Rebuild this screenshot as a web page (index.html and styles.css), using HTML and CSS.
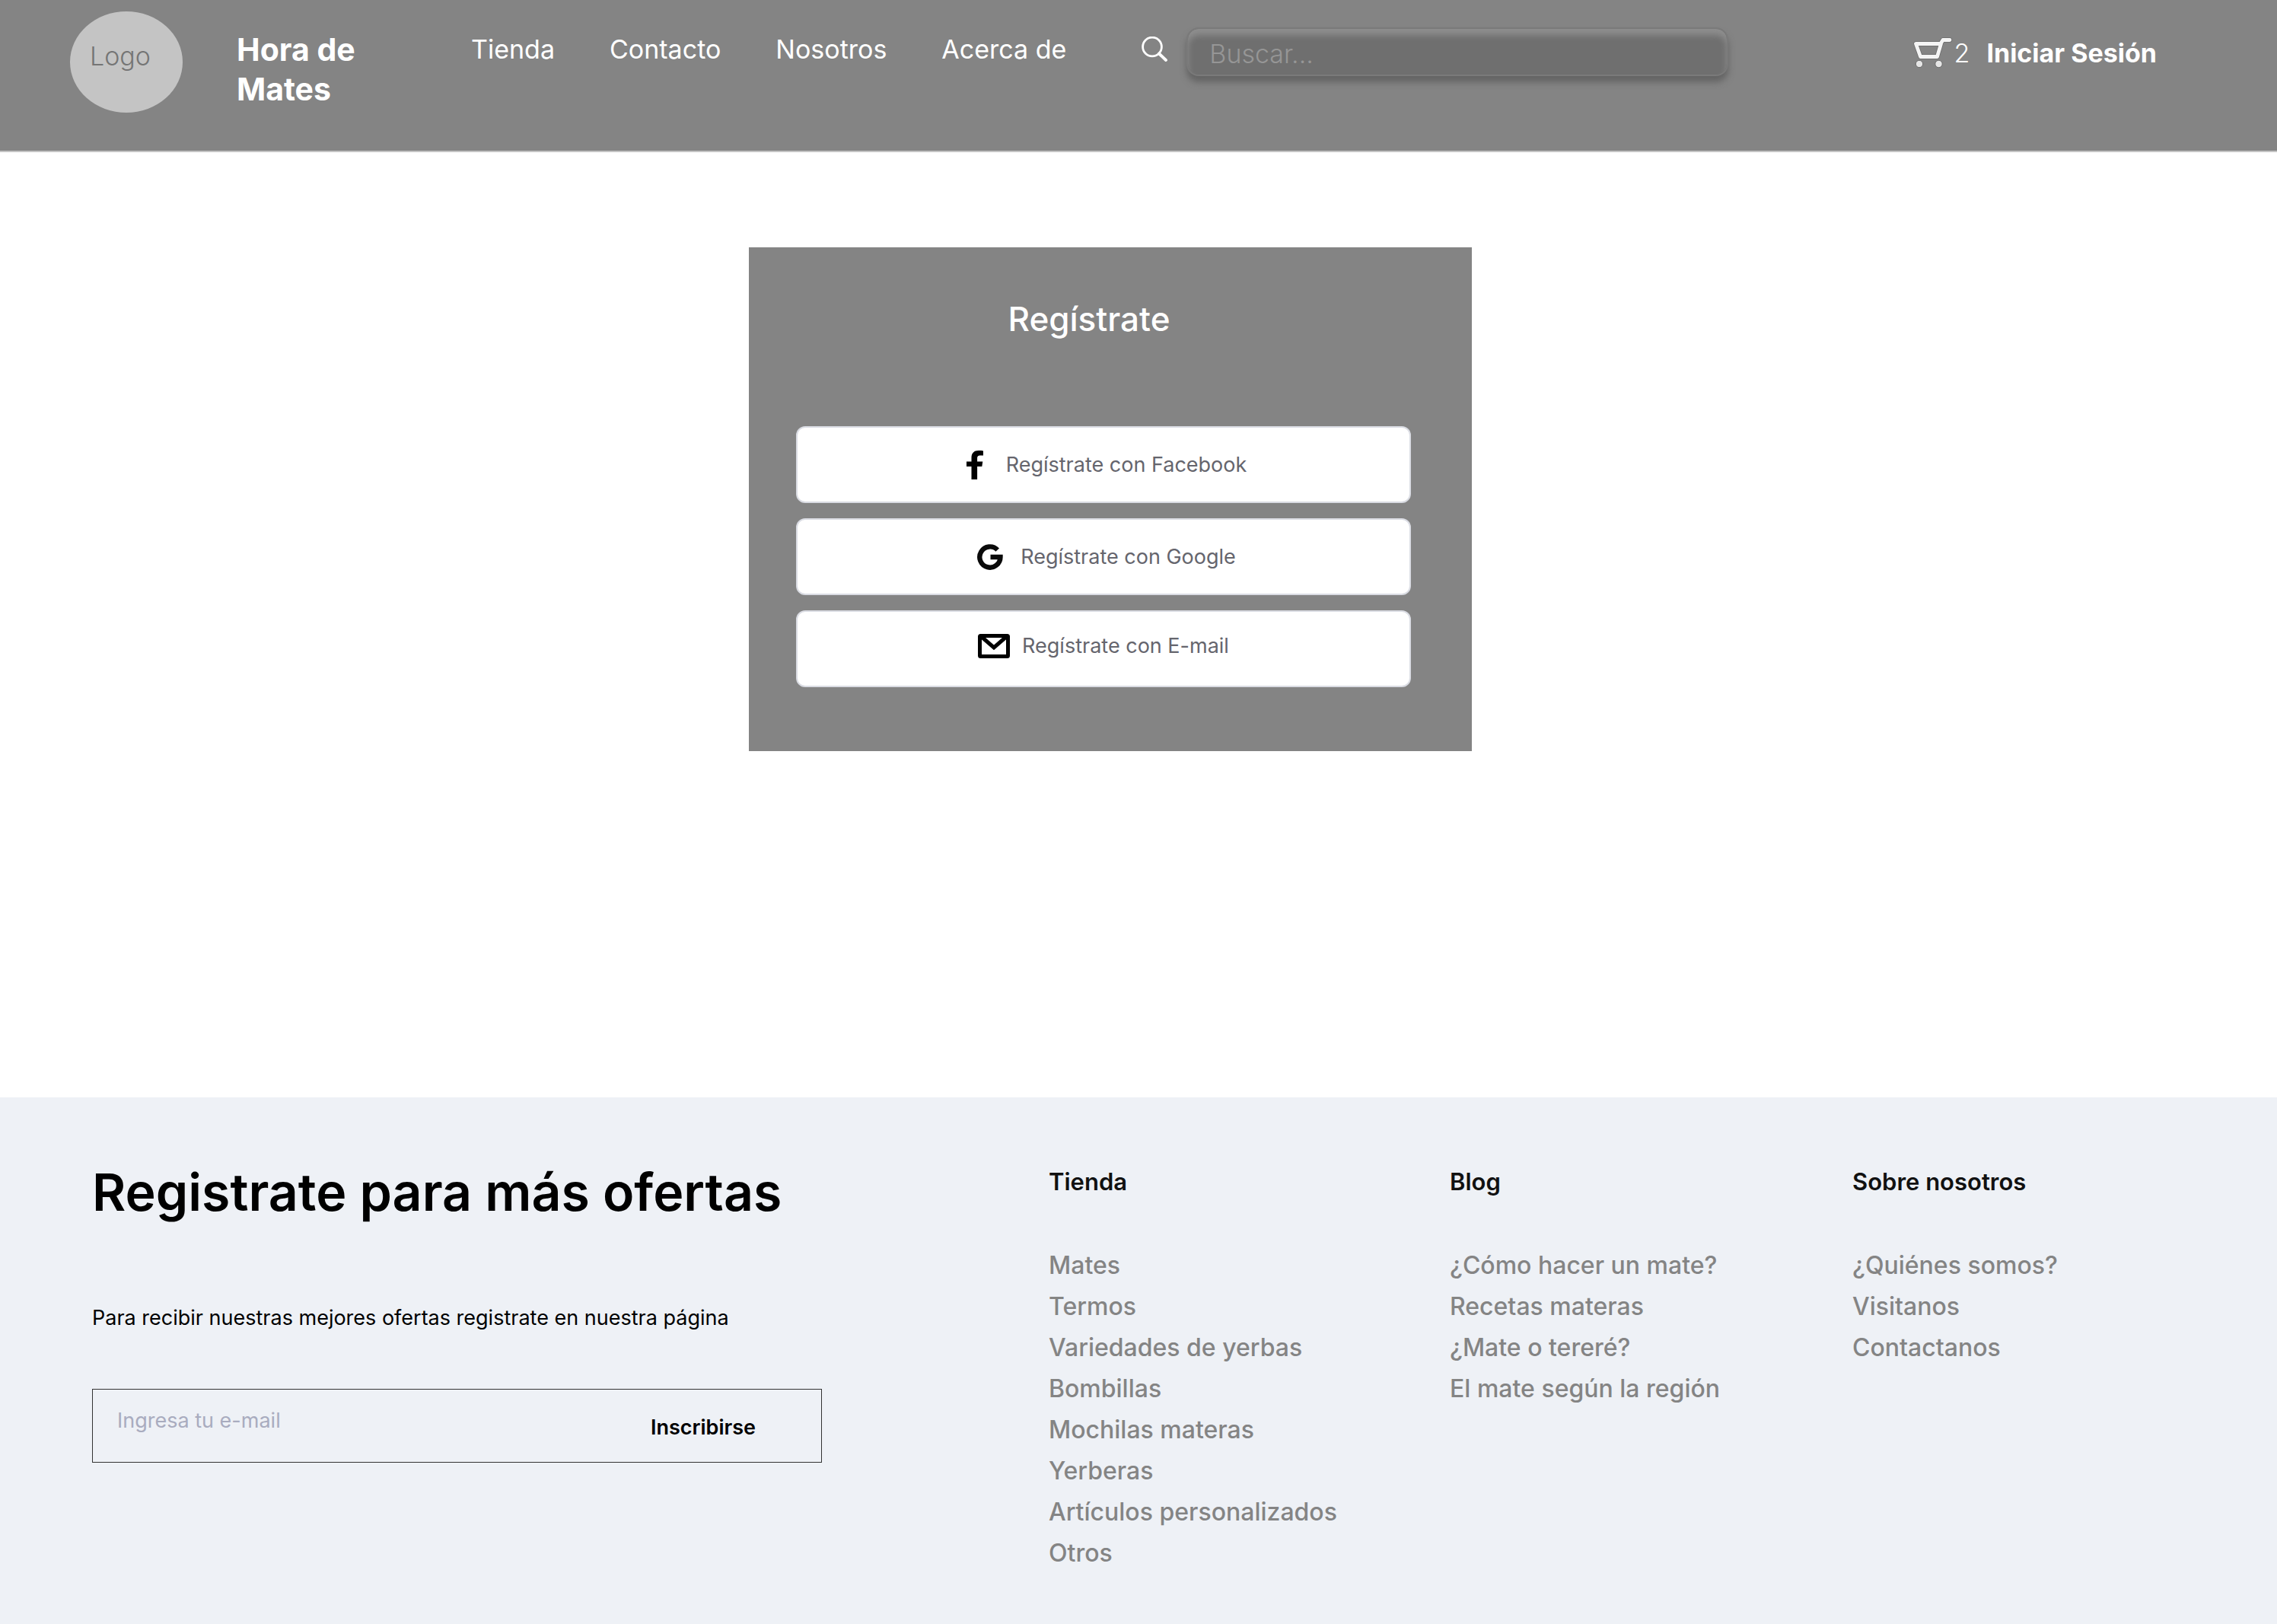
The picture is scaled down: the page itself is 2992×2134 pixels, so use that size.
FILE: index.html
```html
<!DOCTYPE html>
<html lang="es">
<head>
<meta charset="utf-8">
<meta name="viewport" content="width=device-width, initial-scale=1">
<title>Hora de Mates</title>
<link rel="stylesheet" href="styles.css">
</head>
<body>
<header class="topbar">
  <a class="logo" href="#">Logo</a>
  <a class="brand" href="#">Hora de Mates</a>
  <nav class="nav">
    <a href="#">Tienda</a>
    <a href="#">Contacto</a>
    <a href="#">Nosotros</a>
    <a href="#">Acerca de</a>
  </nav>
  <form class="search">
    <label class="search-label" for="buscar">
      <svg width="36" height="34" viewBox="0 0 36 34" role="img" aria-label="Buscar"><circle cx="14" cy="13.500" r="12.400" fill="none" stroke="#fff" stroke-width="2.800"/><path d="M23 22.500 32 31" stroke="#fff" stroke-width="3.800" stroke-linecap="round"/></svg>
    </label>
    <input class="search-input" id="buscar" type="search" placeholder="Buscar...">
  </form>
  <div class="account">
    <a class="cart" href="#" aria-label="Carrito, 2 productos">
      <svg width="53" height="44" viewBox="0 0 53 44"><g fill="none" stroke="#6b6b6b" stroke-width="6.400" stroke-linejoin="round" stroke-linecap="round"><path d="M3.500 9.500H36.500L31.500 26.500H9.500ZM36 9.500 39 4.500H48"/></g><g fill="none" stroke="#f4f4f4" stroke-width="4.800" stroke-linejoin="round" stroke-linecap="round"><path d="M3.500 9.500H36.500L31.500 26.500H9.500ZM36 9.500 39 4.500H48"/></g><g fill="#e6e6e6" stroke="#6b6b6b"><circle cx="8" cy="36" r="4.700"/><circle cx="33.500" cy="36" r="4.700"/></g></svg>
      <span>2</span>
    </a>
    <a class="login" href="#">Iniciar Sesión</a>
  </div>
</header>

<main class="main">
  <section class="card">
    <h1 class="card-title">Regístrate</h1>
    <div class="options">
      <button class="option option-facebook" type="button">
        <svg width="22" height="38" viewBox="0 0 22 38"><path d="M6.500 38V21H0v-6.600h6.500V9.500C6.500 3.200 10 0 16 0c2.600 0 4.400.200 6 .400v6h-3.600c-3.400 0-4.300 1.500-4.300 3.900v4.100h7.200l-1 6.600h-6.200v17z"/></svg>
        <span>Regístrate con Facebook</span>
      </button>
      <button class="option option-google" type="button">
        <svg width="34" height="34" viewBox="0 0 34 34"><path fill="none" stroke="#0a0a0a" stroke-width="6.400" d="M26.700 7.600A13.600 13.600 0 1 0 30.500 17H17.500"/></svg>
        <span>Regístrate con Google</span>
      </button>
      <button class="option option-mail" type="button">
        <svg width="42" height="32" viewBox="0 0 42 32"><rect x="2.500" y="2.500" width="37" height="27" rx="1" fill="none" stroke="#000" stroke-width="5"/><path d="M5 4 21 18 37 4" fill="none" stroke="#000" stroke-width="5"/></svg>
        <span>Regístrate con E-mail</span>
      </button>
    </div>
  </section>
</main>

<footer class="footer">
  <section class="newsletter">
    <h2 class="newsletter-title">Registrate para más ofertas</h2>
    <p class="newsletter-text">Para recibir nuestras mejores ofertas registrate en nuestra página</p>
    <form class="subscribe">
      <input class="subscribe-input" type="email" placeholder="Ingresa tu e-mail" aria-label="Ingresa tu e-mail">
      <button class="subscribe-button" type="button">Inscribirse</button>
    </form>
  </section>
  <nav class="links" aria-labelledby="f-tienda">
    <h3 id="f-tienda">Tienda</h3>
    <ul>
      <li><a href="#">Mates</a></li>
      <li><a href="#">Termos</a></li>
      <li><a href="#">Variedades de yerbas</a></li>
      <li><a href="#">Bombillas</a></li>
      <li><a href="#">Mochilas materas</a></li>
      <li><a href="#">Yerberas</a></li>
      <li><a href="#">Artículos personalizados</a></li>
      <li><a href="#">Otros</a></li>
    </ul>
  </nav>
  <nav class="links" aria-labelledby="f-blog">
    <h3 id="f-blog">Blog</h3>
    <ul>
      <li><a href="#">¿Cómo hacer un mate?</a></li>
      <li><a href="#">Recetas materas</a></li>
      <li><a href="#">¿Mate o tereré?</a></li>
      <li><a href="#">El mate según la región</a></li>
    </ul>
  </nav>
  <nav class="links" aria-labelledby="f-nosotros">
    <h3 id="f-nosotros">Sobre nosotros</h3>
    <ul>
      <li><a href="#">¿Quiénes somos?</a></li>
      <li><a href="#">Visitanos</a></li>
      <li><a href="#">Contactanos</a></li>
    </ul>
  </nav>
</footer>
</body>
</html>
```
FILE: styles.css
```css
* { box-sizing: border-box; }

body {
  margin: 0;
  min-height: 100vh;
  display: flex;
  flex-direction: column;
  background: #fff;
  font-family: Inter, "Liberation Sans", sans-serif;
  color: #000;
}

a { color: inherit; text-decoration: none; }
button, input { font: inherit; color: inherit; }
svg { display: block; flex: none; }

/* Header */
.topbar {
  display: flex;
  align-items: flex-start;
  padding: 15px 158px 50px 92px;
  background: #848484;
  border-bottom: 2px solid #c4c4c4;
  color: #fff;
  font-size: 34px;
  font-weight: 300;
  line-height: 44px;
}

.logo {
  flex: none;
  width: 148px;
  height: 133px;
  padding: 37px 0 0 26px;
  border-radius: 50%;
  background: #c4c4c4;
  color: #757575;
}

.brand {
  flex: none;
  width: 200px;
  margin: 24px 0 0 71px;
  font-size: 41px;
  font-weight: 700;
  line-height: 52px;
}

.nav {
  display: flex;
  gap: 72px;
  margin: 28px 0 0 108px;
  font-weight: 400;
  white-space: nowrap;
}

.search {
  flex: 0 1 771px;
  display: flex;
  gap: 23px;
  margin: 21px 0 0 99px;
}

.search-label { padding-top: 12px; }

.search-input {
  flex: 1;
  min-width: 0;
  height: 64px;
  padding: 4px 28px 0;
  border: 2px solid #7a7a7a;
  border-radius: 16px;
  background: #6f6f6f;
  box-shadow: 0 8px 8px #646464, inset 0 8px 8px #8e8e8e;
  appearance: none;
  outline: none;
}

.search-input::placeholder { color: #969696; opacity: 1; }

.account {
  display: flex;
  gap: 22px;
  margin: 33px 0 0 auto;
  white-space: nowrap;
}

.cart { display: flex; gap: 1px; }
.login { font-weight: 700; }

/* Sign-up card */
.main {
  flex: 1;
  padding: 125px 32px 455px 984px;
}

.card {
  max-width: 950px;
  padding: 66px 80px 84px 62px;
  background: #848484;
}

.card-title {
  margin: 0 38px 113px 0;
  color: #fff;
  font-size: 44px;
  font-weight: 500;
  line-height: 56px;
  text-align: center;
}

.options { display: flex; flex-direction: column; gap: 20px; }

.option {
  display: flex;
  align-items: center;
  justify-content: center;
  height: 101px;
  padding: 0 0 0 8px;
  border: 2px solid #dadce3;
  border-radius: 12px;
  background: #fff;
  color: #65656d;
  font-size: 27px;
}

.option-facebook { gap: 30px; }
.option-google { gap: 23px; }
.option-mail { gap: 16px; padding: 0 0 8px; }

/* Footer */
.footer {
  display: grid;
  grid-template-columns: 1257fr 527fr 529fr 558fr;
  padding: 84px 0 66px 121px;
  background: #eef1f6;
}

.newsletter-title {
  margin: 0;
  font-size: 68px;
  font-weight: 600;
  line-height: 80px;
}

.newsletter-text {
  margin: 104px 0 71px;
  font-size: 27px;
  line-height: 44px;
}

.subscribe {
  display: flex;
  max-width: 959px;
  height: 97px;
  border: 1px solid #333;
  font-size: 27px;
}

.subscribe-input {
  flex: 1;
  min-width: 0;
  padding: 0 32px 14px;
  border: 0;
  background: none;
  outline: none;
}

.subscribe-input::placeholder { color: #a9acbf; opacity: 1; }

.subscribe-button {
  padding: 4px 86px 0;
  border: 0;
  background: none;
  font-weight: 600;
}

.links { font-size: 32px; line-height: 54px; }

.links h3 {
  margin: 0 0 56px;
  color: #111;
  font-size: 31px;
  font-weight: 600;
}

.links ul { margin: 0; padding: 0; list-style: none; }
.links li { color: #848484; font-weight: 500; }
```
